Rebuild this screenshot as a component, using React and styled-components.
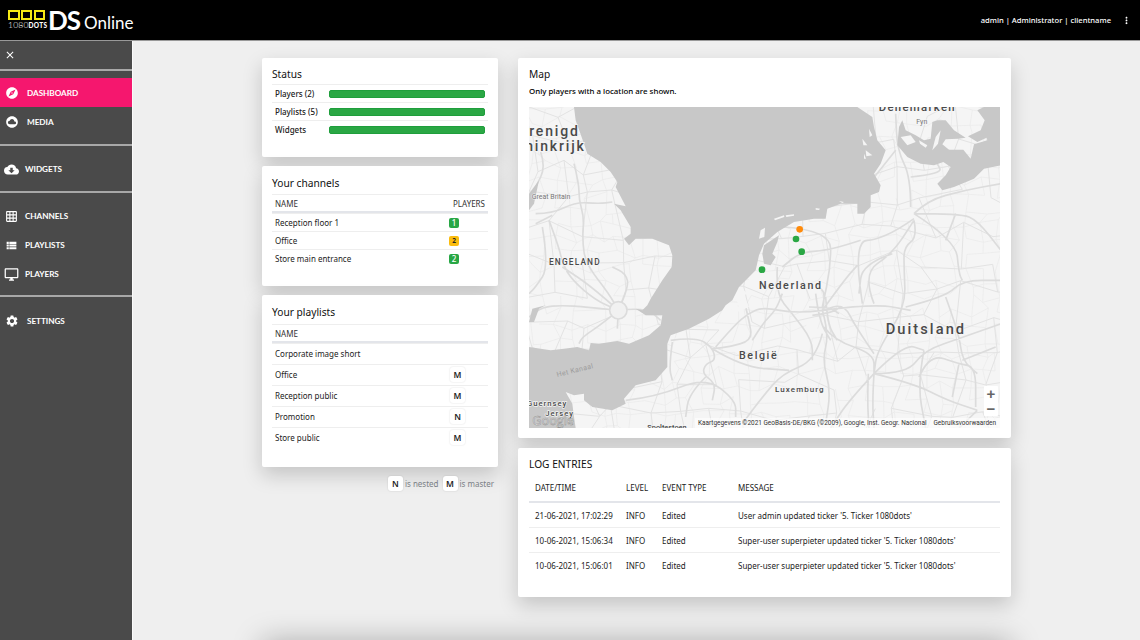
import styled, { createGlobalStyle } from "styled-components";
import {
  MdClose,
  MdCloudCircle,
  MdCloudDownload,
  MdExplore,
  MdGridOn,
  MdMoreVert,
  MdOutlineDesktopWindows,
  MdSettings,
  MdViewList,
} from "react-icons/md";

const GlobalStyle = createGlobalStyle`
  html, body {
    margin: 0;
    height: 100%;
    overflow: hidden;
    background: #efefef;
    font-family: "Noto Sans", "Open Sans", sans-serif;
    color: #212529;
  }
  * { box-sizing: border-box; }
`;

const Page = styled.div`
  display: flex;
  flex-direction: column;
  width: 1140px;
  height: 640px;
  overflow: hidden;
`;

const TopBar = styled.header`
  display: flex;
  align-items: center;
  justify-content: space-between;
  height: 41px;
  flex: none;
  padding: 0 8px;
  background: #000;
  border-bottom: 1px solid #999;
  color: #fff;
`;

const Logo = styled.div`
  display: flex;
  align-items: center;
`;

const LogoMark = styled.div`
  display: flex;
  flex-direction: column;
  width: 37px;
  margin: 1px 3px 0 0;
`;

const Squares = styled.div`
  display: flex;
  justify-content: space-between;
`;

const Square = styled.span`
  width: 11.5px;
  height: 10.5px;
  border: 2px solid #f6ea14;
`;

const DotsText = styled.span`
  font-family: "Lato", sans-serif;
  font-size: 8.5px;
  line-height: 10px;
  font-weight: 300;
  letter-spacing: 0.2px;
  white-space: nowrap;
  b {
    font-weight: 900;
    font-size: 6.5px;
    letter-spacing: 0.3px;
  }
`;

const DsText = styled.span`
  font-family: "Lato", sans-serif;
  font-size: 26px;
  line-height: 30px;
  font-weight: 700;
  letter-spacing: -1px;
`;

const OnlineText = styled.span`
  font-family: "Lato", sans-serif;
  font-size: 17px;
  margin-left: 4px;
  margin-top: 4px;
  font-weight: 400;
`;

const UserBox = styled.div`
  display: flex;
  align-items: center;
  gap: 10px;
  font-size: 7.6px;
  font-weight: 500;
  svg {
    font-size: 11px;
  }
`;

const Body = styled.div`
  display: flex;
  flex: 1;
  min-height: 0;
`;

const Sidebar = styled.nav`
  width: 133px;
  flex: none;
  background: #4a4a4a;
  border-right: 1px solid #fafafa;
  color: #fff;
  font-family: "Lato", sans-serif;
`;

const CloseRow = styled.div`
  display: flex;
  align-items: center;
  height: 28px;
  padding-left: 4px;
  svg {
    font-size: 12px;
  }
`;

const NavGroup = styled.div`
  padding: ${(p) => p.$pad};
  border-top: 2px solid #a8a8a8;
`;

const NavRow = styled.div`
  display: flex;
  align-items: center;
  height: 29px;
  padding: 1px 0 0 4px;
  background: ${(p) => (p.$active ? "#f5176e" : "transparent")};
  font-size: 8.2px;
  font-weight: 700;
  letter-spacing: -0.05px;
`;

const NavIcon = styled.span`
  display: flex;
  align-items: center;
  justify-content: center;
  width: 15px;
  margin-right: ${(p) => p.$gap}px;
  font-size: ${(p) => p.$size}px;
`;

const Main = styled.main`
  display: grid;
  flex: 1;
  grid-template-columns: 236px 493px;
  grid-template-rows: auto auto;
  column-gap: 20px;
  align-content: start;
  padding: 17px 0 0 129px;
  min-width: 0;
`;

const Column = styled.div`
  display: flex;
  flex-direction: column;
  gap: ${(p) => p.$gap}px;
`;

const Card = styled.section`
  height: ${(p) => p.$height}px;
  padding: 10px ${(p) => p.$padX || 10}px 0;
  background: #fff;
  border-radius: 2px;
  box-shadow: 0 8px 20px rgba(0, 0, 0, 0.18);
`;

const CardTitle = styled.h2`
  margin: 0;
  font-size: 10.2px;
  line-height: 13px;
  font-weight: 400;
  color: #111;
  padding: ${(p) => p.$pad || "0 0 5px"};
`;

const Row = styled.div`
  display: grid;
  grid-template-columns: ${(p) => p.$cols};
  align-items: center;
  height: ${(p) => p.$h}px;
  padding: 0 3px ${(p) => p.$lift || 0}px;
  font-size: 8px;
  border-top: 1px solid #eeeeee;
  ${(p) => p.$head && "border-bottom: 2px solid #e3e5ea; color: #333;"}
`;

const BarTrack = styled.div`
  height: 8px;
  border-radius: 2px;
  background: #2aa744;
  border: 1px solid #1f9e3c;
`;

const RowLabel = styled.span`
  color: #222;
  font-weight: ${(p) => (p.$strong ? 500 : 400)};
`;

const HeadRight = styled.span`
  text-align: right;
`;

const Badge = styled.span`
  display: flex;
  align-items: center;
  justify-content: center;
  width: 10px;
  height: 10px;
  border-radius: 2px;
  font-size: ${(p) => (p.$warn ? 6.5 : 8)}px;
  font-weight: ${(p) => (p.$warn ? 700 : 500)};
  background: ${(p) => (p.$warn ? "#fbbc0e" : "#28a745")};
  color: ${(p) => (p.$warn ? "#222" : "#fff")};
`;

const Chip = styled.span`
  display: flex;
  align-items: center;
  justify-content: center;
  width: 15px;
  height: 15px;
  background: #fff;
  border-radius: 3px;
  font-size: 8.5px;
  font-weight: 600;
  color: #222;
  box-shadow: 0 0 2px rgba(0, 0, 0, 0.14);
`;

const PlaylistChip = styled(Chip)`
  margin-left: 2px;
`;

const Legend = styled.div`
  display: flex;
  align-items: center;
  justify-content: flex-end;
  gap: 2px;
  padding-right: 4px;
  font-size: 8px;
  color: #7a7f85;
  > :nth-child(3) {
    margin-left: 2px;
  }
`;

const Note = styled.p`
  margin: 0 0 10px;
  font-size: 7.9px;
  line-height: 11px;
  font-weight: 500;
  color: #000;
`;

const MapBox = styled.div`
  position: relative;
  width: 471px;
  height: 321px;
  overflow: hidden;
  background: #f5f5f5;
  svg {
    display: block;
  }
`;

const Attribution = styled.div`
  position: absolute;
  right: 0;
  bottom: 0;
  display: flex;
  gap: 7px;
  padding: 0 4px 0 3px;
  background: rgba(255, 255, 255, 0.6);
  font-family: "Roboto", sans-serif;
  font-size: 6.45px;
  line-height: 10px;
  color: #333;
  white-space: nowrap;
`;

const ZoomControl = styled.div`
  position: absolute;
  right: 2px;
  bottom: 12px;
  display: flex;
  flex-direction: column;
  width: 14px;
  background: #fff;
  border-radius: 1px;
`;

const ZoomButton = styled.span`
  display: flex;
  align-items: center;
  justify-content: center;
  height: 15px;
  font-family: "Liberation Sans", sans-serif;
  font-size: 15px;
  font-weight: 700;
  color: #666;
`;

const LogRow = styled.div`
  display: grid;
  grid-template-columns: 91px 36px 76px 1fr;
  align-items: center;
  height: ${(p) => p.$h}px;
  padding: 0 0 ${(p) => (p.$head ? 2 : 0)}px 6px;
  font-size: 8px;
  color: #222;
  border-bottom: ${(p) =>
    p.$head ? "2px solid #e3e5ea" : p.$last ? "0" : "1px solid #eeeeee"};
`;

const NextCard = styled.section`
  grid-column: 1 / 3;
  height: 60px;
  background: #fff;
  box-shadow: 0 0 30px rgba(0, 0, 0, 0.28);
  margin-top: 44px;
`;

// map drawing, all coordinates are 3x the pixels of the map box
const sea =
  "M135 0L140 40 165 110 175 140 215 165 245 195 265 225 260 240 290 298 255 290 275 310 305 360 305 380 285 395 300 415 320 395 370 395 420 415 430 445 428 480 400 520 365 575 355 595 340 610 320 605 350 625 400 625 395 655 360 685 300 710 265 702 210 710 185 708 180 730 145 720 105 725 65 730 0 720 0 963 140 963 135 930 130 890 110 855 135 865 165 860 165 880 190 900 250 910 290 890 285 875 320 835 380 820 415 780 415 710 425 685 480 665 540 635 580 610 590 595 610 580 630 540 660 510 680 490 690 445 705 410 745 375 795 345 855 335 890 335 895 305 935 290 985 290 985 320 1005 320 1025 300 1025 265 1050 255 1055 235 1035 200 1055 170 1070 130 1045 100 1035 60 1030 30 985 0Z";

const waters = [
  "M1416 0L1365 0 1345 10 1367 40 1355 70 1317 88 1345 105 1373 92 1375 100 1335 112 1325 155 1303 128 1260 128 1240 112 1250 97 1287 95 1310 92 1275 70 1250 40 1225 40 1210 45 1205 95 1185 100 1160 85 1130 70 1120 40 1110 60 1105 115 1135 150 1175 170 1215 175 1243 165 1265 180 1250 205 1225 230 1240 250 1275 240 1335 215 1365 185 1416 175Z",
  "M705 415L750 385 745 405 730 440 740 450 725 475 705 470 700 440Z",
  "M0 260L30 220 15 290 0 310Z",
  "M0 645L10 605 50 595 30 605 15 645Z",
];

const islands = [
  "M1210 130L1220 90 1235 70 1227 110Z",
  "M1115 90L1145 85 1160 105 1135 115Z",
  "M1170 100L1195 115 1190 122 1173 110Z",
  "M735 335L765 325 766 330 738 340Z",
  "M770 325L795 322 795 326 772 330Z",
  "M860 303L873 305 870 309 860 308Z",
  "M930 282L945 285 940 288Z",
  "M1020 65L1030 85 1022 90Z",
  "M1000 95L1015 115 1003 115Z",
  "M1010 130L1030 145 1012 148Z",
  "M1005 140L1011 155 1005 155Z",
  "M690 395L695 370 708 362 706 390Z",
  "M635 540L655 560 615 580 640 575 610 600 650 590 600 610 590 630 660 600Z",
];

const motorways = [
  "35 135 50 180 20 240",
  "135 170 150 230 150 280 165 330 160 400 170 470 240 560 268 610",
  "20 320 70 320 140 285 210 290 250 285",
  "60 340 90 420 100 470 130 520 200 580 268 610",
  "20 350 70 325",
  "268 610 170 600 100 595 40 600 0 630",
  "268 610 220 650 160 690 150 710",
  "268 610 190 540 100 480",
  "268 610 300 540 290 500 250 480",
  "268 610 350 600 395 640",
  "268 610 265 665",
  "425 700 500 690 550 720 560 760 530 770 520 800 560 830 550 880",
  "430 705 420 780 430 820",
  "650 600 660 640 670 700 600 720 550 725",
  "550 725 640 780 780 790",
  "880 610 805 620 700 600 660 620",
  "880 610 1035 590 1145 610",
  "880 610 945 520 985 475",
  "1155 335 1105 370 1035 400 995 400 985 475 1000 590",
  "1145 300 1145 210 1105 130 1100 20",
  "1155 320 1195 280 1305 250 1416 230",
  "1155 340 1165 390 1125 420 1125 480 1130 600 1045 730 1035 800",
  "1155 320 1295 320 1345 340 1416 430",
  "765 360 905 370 905 480 880 600",
  "995 400 905 430 815 435 760 480",
  "885 660 915 700 1035 740 1035 800",
  "1035 800 1030 880 1035 963",
  "1018 800 1015 880 1020 963",
  "1035 800 1125 710 1185 730",
  "1035 800 1155 830 1255 880 1345 910",
  "1035 800 1135 800 1185 730 1305 690 1416 650",
  "1130 600 1250 570 1300 520 1416 520",
  "1170 810 1200 740 1290 770 1340 780 1340 900",
  "880 680 860 760 760 800 700 870 640 950",
  "290 880 380 870 530 810 620 880 620 930",
  "530 810 480 860 470 930",
  "670 700 700 650 740 610 760 560",
  "880 610 890 560 870 540",
  "880 610 900 680 880 760 905 850 890 950",
  "1035 740 980 660 945 590 880 610",
  "1345 910 1290 963",
  "1250 570 1290 680 1300 760 1345 800",
  "1090 440 1000 470 990 560",
  "1250 400 1280 320",
  "1145 210 1240 200 1225 170",
  "840 600 900 600 930 620",
  "850 625 905 618 935 600",
  "860 560 870 640 905 700",
  "890 570 895 650 925 700",
  "745 480 740 560 790 620 850 700 850 760",
  "560 720 620 650 660 620",
  "1035 800 960 880 905 963",
  "1300 760 1400 720",
  "1185 730 1165 830 1190 963",
  "1290 770 1270 870",
  "1035 590 1000 500 1090 440 1155 340",
  "1155 320 1280 400 1290 500 1300 520",
  "1100 130 1020 230",
  "40 360 60 480 20 540 0 560",
];

function smooth(line) {
  const n = line.split(" ").map(Number);
  let d = `M${n[0]} ${n[1]}`;
  for (let i = 2; i < n.length - 2; i += 2) {
    d += `Q${n[i]} ${n[i + 1]} ${(n[i] + n[i + 2]) / 2} ${(n[i + 1] + n[i + 3]) / 2}`;
  }
  return d + `L${n[n.length - 2]} ${n[n.length - 1]}`;
}

function buildMesh(step, start) {
  let seed = start;
  const rnd = () => {
    seed = (seed * 16807) % 2147483647;
    return seed / 2147483647;
  };
  const nx = Math.ceil(1413 / step) + 1;
  const ny = Math.ceil(963 / step) + 1;
  const pts = [];
  for (let y = 0; y <= ny; y++) {
    const line = [];
    for (let x = 0; x <= nx; x++) {
      line.push([
        Math.round(x * step + (rnd() - 0.5) * step * 0.7),
        Math.round(y * step + (rnd() - 0.5) * step * 0.7),
      ]);
    }
    pts.push(line);
  }
  let d = "";
  pts.forEach((line, y) =>
    line.forEach((p, x) => {
      if (x < nx && rnd() > 0.25) d += `M${p[0]} ${p[1]}L${line[x + 1][0]} ${line[x + 1][1]}`;
      if (y < ny && rnd() > 0.25) d += `M${p[0]} ${p[1]}L${pts[y + 1][x][0]} ${pts[y + 1][x][1]}`;
    })
  );
  return d;
}

const fineMesh = buildMesh(44, 4711);
const mesh = buildMesh(92, 1234);

const labels = [
  { t: "Verenigd", x: 152, y: 88, size: 42, sp: 5.5, anchor: "end" },
  { t: "Koninkrijk", x: 170, y: 132, size: 42, sp: 5.5, anchor: "end" },
  { t: "Denemarken", x: 1165, y: 13, size: 34, sp: 4, anchor: "middle" },
  { t: "ENGELAND", x: 60, y: 474, size: 25, sp: 3.5 },
  { t: "Nederland", x: 690, y: 546, size: 32, sp: 4.8 },
  { t: "Duitsland", x: 1070, y: 680, size: 44, sp: 6.2 },
  { t: "België", x: 630, y: 756, size: 32, sp: 4.8 },
  { t: "Luxemburg", x: 738, y: 855, size: 24, sp: 3.2 },
  { t: "Guernsey", x: 115, y: 896, size: 23, sp: 3, anchor: "end" },
  { t: "Jersey", x: 135, y: 927, size: 23, sp: 3, anchor: "end" },
];

function MapDrawing() {
  return (
    <svg width="471" height="321" viewBox="0 0 1413 963">
      <path d={fineMesh} fill="none" stroke="#ebebeb" strokeWidth="2.2" />
      <path d={mesh} fill="none" stroke="#e3e3e3" strokeWidth="3" />
      <path
        d={motorways.map(smooth).join("")}
        fill="none"
        stroke="#dcdcdc"
        strokeWidth="5"
        strokeLinejoin="round"
      />
      <circle cx="268" cy="610" r="26" fill="#f1f1f1" stroke="#dcdcdc" strokeWidth="5" />
      <path d={sea} fill="#c8c8c8" />
      {waters.map((d) => (
        <path key={d} d={d} fill="#c8c8c8" />
      ))}
      {islands.map((d) => (
        <path key={d} d={d} fill="#f5f5f5" />
      ))}
      <g fontFamily="Roboto, sans-serif" fill="#4a4a4a" stroke="#f5f5f5" paintOrder="stroke">
        {labels.map((l) => (
          <text
            key={l.t}
            x={l.x}
            y={l.y}
            fontSize={l.size}
            fontWeight="500"
            letterSpacing={l.sp}
            textAnchor={l.anchor || "start"}
            strokeWidth="4"
          >
            {l.t}
          </text>
        ))}
        <text x="8" y="275" fontSize="21" fill="#777" strokeWidth="3">
          Great Britain
        </text>
        <text x="1162" y="50" fontSize="21" fill="#777" strokeWidth="3">
          Fyn
        </text>
        <text
          x="85"
          y="810"
          fontSize="21"
          fill="#9c9c9c"
          stroke="none"
          letterSpacing="1"
          transform="rotate(-14 85 810)"
        >
          Het Kanaal
        </text>
        <text x="355" y="970" fontSize="22" fontWeight="500" strokeWidth="3">
          Spoltestoen
        </text>
      </g>
      <text
        x="10"
        y="953"
        fontFamily="Open Sans, sans-serif"
        fontSize="38"
        fill="#fff"
        fillOpacity="0.85"
        stroke="#8c8c8c"
        strokeWidth="1.5"
      >
        Google
      </text>
      <circle cx="812" cy="367" r="10" fill="#ff8a0a" />
      <circle cx="801" cy="396" r="10" fill="#2aa744" />
      <circle cx="818" cy="434" r="10" fill="#2aa744" />
      <circle cx="699" cy="488" r="10" fill="#2aa744" />
    </svg>
  );
}

const cols2 = "1fr auto";
const statusCols = "54px 1fr";

const logEntries = [
  ["21-06-2021, 17:02:29", "INFO", "Edited", `User admin updated ticker '5. Ticker 1080dots'`],
  ["10-06-2021, 15:06:34", "INFO", "Edited", `Super-user superpieter updated ticker '5. Ticker 1080dots'`],
  ["10-06-2021, 15:06:01", "INFO", "Edited", `Super-user superpieter updated ticker '5. Ticker 1080dots'`],
];

const playlists = [
  ["Office", "M"],
  ["Reception public", "M"],
  ["Promotion", "N"],
  ["Store public", "M"],
];

export default function App() {
  return (
    <Page>
      <GlobalStyle />
      <TopBar>
        <Logo>
          <LogoMark>
            <Squares>
              <Square />
              <Square />
              <Square />
            </Squares>
            <DotsText>
              1080<b>DOTS</b>
            </DotsText>
          </LogoMark>
          <DsText>DS</DsText>
          <OnlineText>Online</OnlineText>
        </Logo>
        <UserBox>
          admin | Administrator | clientname
          <MdMoreVert />
        </UserBox>
      </TopBar>
      <Body>
        <Sidebar>
          <CloseRow>
            <MdClose />
          </CloseRow>
          <NavGroup $pad="7px 0 8px">
            <NavRow $active>
              <NavIcon $size={14} $gap={8}>
                <MdExplore />
              </NavIcon>
              DASHBOARD
            </NavRow>
            <NavRow>
              <NavIcon $size={14} $gap={8}>
                <MdCloudCircle />
              </NavIcon>
              MEDIA
            </NavRow>
          </NavGroup>
          <NavGroup $pad="8px 0 8px">
            <NavRow>
              <NavIcon $size={15} $gap={6}>
                <MdCloudDownload />
              </NavIcon>
              WIDGETS
            </NavRow>
          </NavGroup>
          <NavGroup $pad="8px 0 7px">
            <NavRow>
              <NavIcon $size={13} $gap={6}>
                <MdGridOn />
              </NavIcon>
              CHANNELS
            </NavRow>
            <NavRow>
              <NavIcon $size={13} $gap={6}>
                <MdViewList />
              </NavIcon>
              PLAYLISTS
            </NavRow>
            <NavRow>
              <NavIcon $size={15} $gap={6}>
                <MdOutlineDesktopWindows />
              </NavIcon>
              PLAYERS
            </NavRow>
          </NavGroup>
          <NavGroup $pad="9px 0">
            <NavRow>
              <NavIcon $size={14} $gap={8}>
                <MdSettings />
              </NavIcon>
              SETTINGS
            </NavRow>
          </NavGroup>
        </Sidebar>
        <Main>
          <Column $gap={9}>
            <Card $height={99}>
              <CardTitle $pad="0 0 3px">Status</CardTitle>
              <Row $cols={statusCols} $h={18}>
                <RowLabel $strong>Players (2)</RowLabel>
                <BarTrack />
              </Row>
              <Row $cols={statusCols} $h={18}>
                <RowLabel $strong>Playlists (5)</RowLabel>
                <BarTrack />
              </Row>
              <Row $cols={statusCols} $h={18}>
                <RowLabel $strong>Widgets</RowLabel>
                <BarTrack />
              </Row>
            </Card>
            <Card $height={120}>
              <CardTitle $pad="1px 0 4px">Your channels</CardTitle>
              <Row $cols={cols2} $h={19} $head>
                <span>NAME</span>
                <HeadRight>PLAYERS</HeadRight>
              </Row>
              <Row $cols="174px 1fr" $h={18}>
                <RowLabel>Reception floor 1</RowLabel>
                <Badge>1</Badge>
              </Row>
              <Row $cols="174px 1fr" $h={18}>
                <RowLabel>Office</RowLabel>
                <Badge $warn>2</Badge>
              </Row>
              <Row $cols="174px 1fr" $h={18}>
                <RowLabel>Store main entrance</RowLabel>
                <Badge>2</Badge>
              </Row>
            </Card>
            <Card $height={172}>
              <CardTitle $pad="1px 0 5px">Your playlists</CardTitle>
              <Row $cols={cols2} $h={19} $head>
                <span>NAME</span>
              </Row>
              <Row $cols={cols2} $h={21} $lift={2}>
                <RowLabel>Corporate image short</RowLabel>
              </Row>
              {playlists.map(([name, kind]) => (
                <Row key={name} $cols="173px 1fr" $h={21} $lift={2}>
                  <RowLabel>{name}</RowLabel>
                  <PlaylistChip>{kind}</PlaylistChip>
                </Row>
              ))}
            </Card>
            <Legend>
              <Chip>N</Chip>
              <span>is nested</span>
              <Chip>M</Chip>
              <span>is master</span>
            </Legend>
          </Column>
          <Column $gap={10}>
            <Card $height={380} $padX={11}>
              <CardTitle>Map</CardTitle>
              <Note>Only players with a location are shown.</Note>
              <MapBox>
                <MapDrawing />
                <ZoomControl>
                  <ZoomButton>+</ZoomButton>
                  <ZoomButton>−</ZoomButton>
                </ZoomControl>
                <Attribution>
                  <span>Kaartgegevens ©2021 GeoBasis-DE/BKG (©2009), Google, Inst. Geogr. Nacional</span>
                  <span>Gebruiksvoorwaarden</span>
                </Attribution>
              </MapBox>
            </Card>
            <Card $height={149} $padX={11}>
              <CardTitle>LOG ENTRIES</CardTitle>
              <LogRow $head $h={27}>
                <span>DATE/TIME</span>
                <span>LEVEL</span>
                <span>EVENT TYPE</span>
                <span>MESSAGE</span>
              </LogRow>
              {logEntries.map((entry, i) => (
                <LogRow key={entry[0]} $h={25} $last={i === 2}>
                  {entry.map((cell) => (
                    <span key={cell}>{cell}</span>
                  ))}
                </LogRow>
              ))}
            </Card>
          </Column>
          <NextCard />
        </Main>
      </Body>
    </Page>
  );
}
